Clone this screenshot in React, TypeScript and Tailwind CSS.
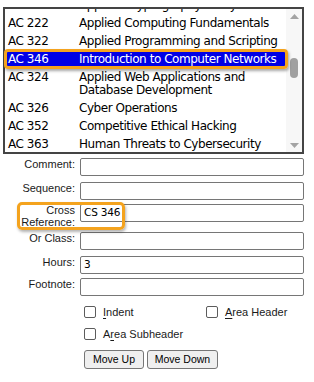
import React from "react";

const rows: { code: string; title: string[]; selected?: boolean }[] = [
  { code: "AC 221", title: ["Applied Cryptography Policy"] },
  { code: "AC 222", title: ["Applied Computing Fundamentals"] },
  { code: "AC 322", title: ["Applied Programming and Scripting"] },
  { code: "AC 346", title: ["Introduction to Computer Networks"], selected: true },
  { code: "AC 324", title: ["Applied Web Applications and", "Database Development"] },
  { code: "AC 326", title: ["Cyber Operations"] },
  { code: "AC 352", title: ["Competitive Ethical Hacking"] },
  { code: "AC 363", title: ["Human Threats to Cybersecurity"] },
];

const labelFont = { fontFamily: '"Liberation Sans", Arial, sans-serif' };
const listFont = { fontFamily: '"DejaVu Sans", Verdana, sans-serif' };

function Field({ label, value, mt, twoLine }: { label: React.ReactNode; value?: string; mt: string; twoLine?: boolean }) {
  return (
    <div className={`flex items-start ${mt}`}>
      <div
        className={`w-[75px] text-right text-[11px] text-[#1a1a1a] ${twoLine ? "leading-[12px]" : "leading-[13px]"}`}
        style={labelFont}
      >
        {label}
      </div>
      <div
        className="ml-[5px] w-[224px] h-[18px] border border-[#767676] rounded-[2px] bg-white flex items-center pl-[3px] text-[10.5px] tracking-[-0.2px] text-black"
        style={listFont}
      >
        {value}
      </div>
    </div>
  );
}

function Check({ children }: { children: React.ReactNode }) {
  return (
    <div className="flex items-center gap-[7px]">
      <span className="w-[12px] h-[12px] border border-[#5c5c5c] rounded-[2px] bg-white" />
      <span className="text-[11px] text-[#1a1a1a] leading-[13px]" style={labelFont}>
        {children}
      </span>
    </div>
  );
}

export default function App() {
  return (
    <div className="relative w-[314px] h-[382px] bg-white overflow-hidden">
      {/* List box */}
      <div className="ml-[3px] mt-[7px] w-[301px] h-[147px] border-2 border-[#444] flex overflow-hidden bg-white">
        <div className="w-[281px] overflow-hidden">
          <div className="-mt-[13px]">
            {rows.map((r) => (
              <div
                key={r.code}
                className={`flex py-[2.5px] pl-[3px] text-[12px] leading-[13px] tracking-[-0.45px] ${
                  r.selected ? "bg-[#0000e6] text-white" : "text-black"
                }`}
                style={listFont}
              >
                <div className="w-[71px] shrink-0">{r.code}</div>
                <div className="whitespace-nowrap">
                  {r.title.map((t) => (
                    <div key={t}>{t}</div>
                  ))}
                </div>
              </div>
            ))}
          </div>
        </div>
        <div className="w-[16px] bg-[#f7f7f7] flex flex-col items-center pt-[5px] pb-[4px]">
          <svg width="9" height="5" viewBox="0 0 9 5">
            <path d="M0 5 L4.5 0 L9 5 Z" fill="#a3a3a3" />
          </svg>
          <div className="mt-[39px] w-[8px] h-[20px] rounded-full bg-[#a0a0a0]" />
          <div className="flex-1" />
          <svg width="9" height="5" viewBox="0 0 9 5">
            <path d="M0 0 L9 0 L4.5 5 Z" fill="#a3a3a3" />
          </svg>
        </div>
      </div>

      {/* Form */}
      <Field label="Comment:" mt="mt-[4px]" />
      <Field label="Sequence:" mt="mt-[6px]" />
      <Field
        label={
          <>
            Cross
            <br />
            Reference:
          </>
        }
        value="CS 346"
        mt="mt-[4px]"
        twoLine
      />
      <Field label="Or Class:" mt="mt-[4px]" />
      <Field label="Hours:" value="3" mt="mt-[6px]" />
      <Field label="Footnote:" mt="mt-[4px]" />

      <div className="ml-[84px] mt-[5px] h-[22px] flex items-center">
        <div className="w-[122px]">
          <Check>
            <span className="underline underline-offset-2">I</span>ndent
          </Check>
        </div>
        <Check>
          <span className="underline underline-offset-2">A</span>rea Header
        </Check>
      </div>
      <div className="ml-[84px] h-[22px] flex items-center">
        <Check>
          A<span className="underline underline-offset-2">r</span>ea Subheader
        </Check>
      </div>

      <div className="ml-[84px] mt-[5px] flex gap-[3px]">
        <button
          className="w-[60px] h-[19px] bg-[#efefef] border border-[#767676] rounded-[3px] text-[10.5px] text-black leading-none"
          style={labelFont}
        >
          Move Up
        </button>
        <button
          className="w-[71px] h-[19px] bg-[#efefef] border border-[#767676] rounded-[3px] text-[10.5px] text-black leading-none"
          style={labelFont}
        >
          Move Down
        </button>
      </div>

      {/* Annotation highlights */}
      <div className="absolute left-[4px] top-[49px] w-[284px] h-[20px] border-[3px] border-[#f4a31e] rounded-[4px] shadow-[1px_2px_3px_rgba(0,0,0,0.35)] pointer-events-none" />
      <div className="absolute left-[17px] top-[202px] w-[108px] h-[28px] border-[3px] border-[#f4a31e] rounded-[5px] shadow-[1px_2px_3px_rgba(0,0,0,0.3)] pointer-events-none" />
    </div>
  );
}
